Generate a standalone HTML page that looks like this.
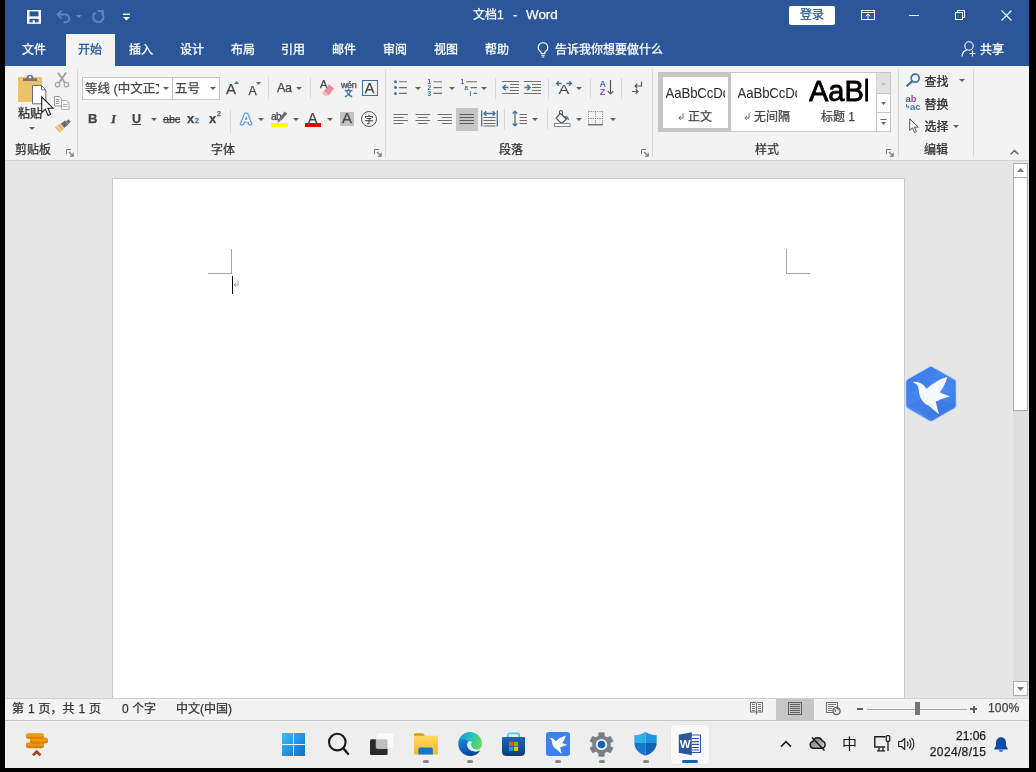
<!DOCTYPE html>
<html lang="zh-CN">
<head>
<meta charset="utf-8">
<title>文档1 - Word</title>
<style>
*{box-sizing:border-box;margin:0;padding:0}
html,body{width:1036px;height:772px;overflow:hidden;background:#000}
body{position:relative;font-family:"Liberation Sans","Noto Sans CJK SC",sans-serif;font-size:12px;color:#262626;line-height:1}
.a{position:absolute}
.t{position:absolute;white-space:nowrap;line-height:16px;height:16px;-webkit-text-stroke:0.25px currentColor}
svg{position:absolute;overflow:visible}
#screen{left:5px;top:0;width:1024px;height:768px;background:#e6e6e6;overflow:hidden}
#titlebar{left:0;top:0;width:1024px;height:66px;background:#2b579a}
#ribbon{left:0;top:66px;width:1024px;height:95px;background:#f3f3f3;border-bottom:1px solid #d2d2d2}
#doc{left:0;top:161px;width:1024px;height:537px;background:#e6e6e6}
#page{left:107px;top:17px;width:793px;height:540px;background:#fff;border:1px solid #c8c8c8;border-bottom:none}
#status{left:0;top:698px;width:1024px;height:22px;background:#f3f3f3;border-top:1px solid #cfcfcf}
#taskbar{left:0;top:720px;width:1024px;height:48px;background:#eeeeee;border-top:1px solid #c4c4c4}
.w{color:#fff}
.tab{position:absolute;top:41px;height:18px;line-height:18px;font-size:12px;color:#fff;white-space:nowrap;-webkit-text-stroke:0.3px currentColor}
.gl{position:absolute;top:142px;height:16px;line-height:16px;font-size:12px;color:#333;white-space:nowrap;-webkit-text-stroke:0.25px currentColor}
.sep{position:absolute;width:1px;background:#d8d8d8}
.dd{position:absolute;width:0;height:0;border-left:3px solid transparent;border-right:3px solid transparent;border-top:3px solid #5e5e5e;margin-left:-0.5px}
#abs{left:-5px;top:0;width:1036px;height:772px;will-change:transform}
.k{color:#444}
</style>
</head>
<body>
<div id="screen" class="a">

<!-- ===== title bar + tabs ===== -->
<div id="titlebar" class="a">
<div class="a" style="left:0;top:0;width:1024px;height:66px;will-change:transform">
  <!-- quick access: save -->
  <svg style="left:22px;top:10px" width="14" height="14" viewBox="0 0 14 14"><rect x="0" y="0" width="14" height="13.8" fill="#fff"/><rect x="2.5" y="1.4" width="9" height="5" fill="#2b579a"/><rect x="2.5" y="8.8" width="9" height="3.6" fill="#2b579a"/><rect x="5.6" y="10.4" width="2.4" height="3.4" fill="#fff"/></svg>
  <!-- undo -->
  <svg style="left:51px;top:9px" width="16" height="15" viewBox="0 0 16 15"><path d="M5.6 1.6 L1.6 5.6 L5.6 9.6 M2 5.6 H9.5 A3.8 3.8 0 0 1 9.5 13.2 H7.5" fill="none" stroke="#5d83c4" stroke-width="2"/></svg>
  <svg style="left:71px;top:15px" width="6" height="3" viewBox="0 0 6 3"><path d="M0 0h6l-3 3z" fill="#5d83c4"/></svg>
  <!-- repeat -->
  <svg style="left:86px;top:9px" width="15" height="15" viewBox="0 0 15 15"><path d="M4.4 3.6 A5.2 5.2 0 1 0 10.6 3.8 M6.6 2 H11.8 V7" fill="none" stroke="#5d83c4" stroke-width="2"/></svg>
  <!-- customize -->
  <svg style="left:118px;top:13px" width="7" height="8" viewBox="0 0 7 8"><rect x="0" y="0.6" width="7" height="1.4" fill="#fff"/><path d="M0 4h7l-3.5 3.6z" fill="#fff"/></svg>
  <!-- title -->
  <div class="t w" style="left:468px;top:7px;font-size:12px;white-space:pre">文档1</div>
  <div class="t w" style="left:508px;top:7px;font-size:13px;white-space:pre">-</div>
  <div class="t w" style="left:521px;top:7px;font-size:13.4px;white-space:pre">Word</div>
  <!-- login -->
  <div class="a" style="left:784px;top:6px;width:46px;height:19px;background:#fff;border-radius:2px"></div>
  <div class="t" style="left:795px;top:7px;font-size:12px;color:#2b579a">登录</div>
  <!-- ribbon display options -->
  <svg style="left:856px;top:10px" width="14" height="10" viewBox="0 0 14 10"><rect x="0.5" y="0.5" width="13" height="9" fill="none" stroke="#fff"/><path d="M0.5 2.5h13" stroke="#fff"/><path d="M7 4v5M4.6 6.2L7 3.9l2.4 2.3" fill="none" stroke="#fff"/></svg>
  <!-- minimize -->
  <div class="a" style="left:904px;top:15px;width:10px;height:1px;background:#fff"></div>
  <!-- restore -->
  <svg style="left:950px;top:10px" width="10" height="10" viewBox="0 0 10 10"><rect x="0.5" y="2.5" width="7" height="7" fill="none" stroke="#fff"/><path d="M2.5 2.5v-2h7v7h-2" fill="none" stroke="#fff"/></svg>
  <!-- close -->
  <svg style="left:996px;top:10px" width="11" height="11" viewBox="0 0 11 11"><path d="M0.5 0.5l10 10M10.5 0.5l-10 10" stroke="#fff" stroke-width="1.1"/></svg>
  <!-- tabs -->
  <div class="a" style="left:61px;top:34px;width:49px;height:33px;background:#f3f3f3"></div>
  <div class="tab" style="left:17px">文件</div>
  <div class="tab" style="left:73px;color:#2b579a">开始</div>
  <div class="tab" style="left:124px">插入</div>
  <div class="tab" style="left:175px">设计</div>
  <div class="tab" style="left:226px">布局</div>
  <div class="tab" style="left:276px">引用</div>
  <div class="tab" style="left:327px">邮件</div>
  <div class="tab" style="left:378px">审阅</div>
  <div class="tab" style="left:429px">视图</div>
  <div class="tab" style="left:480px">帮助</div>
  <!-- bulb -->
  <svg style="left:532px;top:42px" width="12" height="16" viewBox="0 0 12 16"><path d="M6 0.8a4.6 4.6 0 0 0-2.4 8.6c0.4 0.5 0.6 1.2 0.6 2.1h3.6c0-0.9 0.2-1.6 0.6-2.1A4.6 4.6 0 0 0 6 0.8z" fill="none" stroke="#fff" stroke-width="1.1"/><path d="M4.2 13.2h3.6M4.7 15h2.6" stroke="#fff" stroke-width="1.1"/></svg>
  <div class="tab" style="left:550px">告诉我你想要做什么</div>
  <!-- share -->
  <svg style="left:956px;top:41px" width="16" height="16" viewBox="0 0 16 16"><circle cx="8" cy="5" r="4.2" fill="none" stroke="#fff" stroke-width="1.1"/><path d="M1 15.5c0.4-4 2.6-6 5-6.6" fill="none" stroke="#fff" stroke-width="1.1"/><path d="M11.5 9.5v6M8.5 12.5h6" stroke="#fff" stroke-width="1.1"/></svg>
  <div class="tab" style="left:975px">共享</div>
</div>
</div>

<!-- ===== ribbon ===== -->
<div id="ribbon" class="a">
</div>

<!-- ===== document area ===== -->
<div id="doc" class="a">
  <div id="page" class="a"></div>
</div>

<!-- ===== status bar ===== -->
<div id="status" class="a">
</div>

<!-- ===== taskbar ===== -->
<div id="taskbar" class="a">
</div>

<!-- ===== ribbon contents (absolute image coords) ===== -->
<div id="abs" class="a">
<!-- clipboard group -->
<svg style="left:17px;top:73px" width="30" height="32" viewBox="0 0 30 32">
  <rect x="1" y="4" width="24" height="25" rx="1" fill="#eac36c"/>
  <path d="M6 8V5.2h3.6a3.4 3.4 0 0 1 6.8 0H20V8z" fill="#767676"/><circle cx="13" cy="4.2" r="1.3" fill="#f3f3f3"/>
  <path d="M15.5 12.5h9l4.3 4.3v14h-13.3z" fill="#fff" stroke="#6d6d6d" stroke-width="1"/><path d="M24.5 12.5v4.3h4.3" fill="none" stroke="#6d6d6d" stroke-width="1"/>
</svg>
<div class="t" style="left:18px;top:106px">粘贴</div>
<div class="dd" style="left:29px;top:127px"></div>
<!-- mouse pointer -->
<svg style="left:41px;top:96px" width="13" height="21" viewBox="0 0 13 21"><path d="M0.7 0.8V16.6l3.7-3.5 2.7 6.3 2.5-1.1-2.7-6.1h5.1z" fill="#fff" stroke="#1a1a1a" stroke-width="1.1" stroke-linejoin="miter"/></svg>
<!-- cut -->
<svg style="left:54px;top:72px" width="16" height="16" viewBox="0 0 16 16"><path d="M4 0.5l6.8 10.2M12 0.5L5.2 10.7" stroke="#a0a0a0" stroke-width="1.9" fill="none"/><circle cx="3.6" cy="12.6" r="2.3" fill="none" stroke="#a6a6a6" stroke-width="1.3"/><circle cx="12.4" cy="12.6" r="2.3" fill="none" stroke="#a6a6a6" stroke-width="1.3"/></svg>
<!-- copy -->
<svg style="left:54px;top:96px" width="16" height="14" viewBox="0 0 16 14"><path d="M0.5 0.5h5l2 2v7.5h-7z" fill="#f3f3f3" stroke="#9a9a9a"/><path d="M2 3.5h3M2 5.5h3M2 7.5h3" stroke="#9a9a9a"/><path d="M7.5 4.5h5l2.5 2.5v6.5h-7.5z" fill="#f8f8f8" stroke="#b0b0b0"/><path d="M9 8.500h4.500M9 10.500h4.500" stroke="#b0b0b0"/></svg>
<!-- format painter -->
<svg style="left:54px;top:119px" width="17" height="14" viewBox="0 0 17 14"><path d="M12 2.400l2.600-2.200 2.200 2.600-2.600 2.200z" fill="#6e6e6e"/><path d="M6.800 4.800l4.200-3.400 3.400 4.200-4.200 3.400z" fill="#6e6e6e"/><path d="M0.800 8.200l5.200-3.400 4 5-4 4z" fill="#e8b961"/><path d="M3 7l4.600 5.500" stroke="#f3f3f3" stroke-width="0.900"/></svg>
<div class="gl" style="left:15px">剪贴板</div>
<svg style="left:66px;top:149px" width="8" height="8" viewBox="0 0 8 8"><path d="M0.500 5V0.500H5" fill="none" stroke="#777"/><path d="M3 3l4 4M7.200 3.800V7.200H3.800" fill="none" stroke="#777" stroke-width="1.100"/></svg>
<div class="sep" style="left:77px;top:69px;height:88px"></div>

<!-- font group: row 1 -->
<div class="a" style="left:82px;top:77px;width:91px;height:23px;background:#fff;border:1px solid #c6c6c6"></div>
<div class="a" style="left:172px;top:77px;width:48px;height:23px;background:#fff;border:1px solid #c6c6c6"></div>
<div class="t" style="left:85px;top:81px;width:74px;overflow:hidden;font-size:12.5px;color:#444">等线 (中文正文</div>
<div class="dd" style="left:163px;top:87px"></div>
<div class="t" style="left:175px;top:81px;font-size:12.5px;color:#444">五号</div>
<div class="dd" style="left:210px;top:87px"></div>
<div class="t k" style="left:226px;top:81px;font-size:15px">A</div>
<svg style="left:234px;top:81px" width="5" height="3" viewBox="0 0 5 3"><path d="M0 3h5l-2.500-3z" fill="#41719c"/></svg>
<div class="t k" style="left:248.5px;top:82.5px;font-size:12.3px">A</div>
<svg style="left:255.5px;top:81.5px" width="5" height="3" viewBox="0 0 5 3"><path d="M0 0h5l-2.500 3z" fill="#41719c"/></svg>
<div class="sep" style="left:268px;top:77px;height:22px"></div>
<div class="t k" style="left:277px;top:80px;font-size:12.6px;letter-spacing:-0.3px">Aa</div>
<div class="dd" style="left:296px;top:87px"></div>
<div class="sep" style="left:310px;top:77px;height:22px"></div>
<!-- clear formatting -->
<div class="t k" style="left:320px;top:76px;font-size:11px">A</div>
<svg style="left:321px;top:84px" width="14" height="12" viewBox="0 0 14 12"><path d="M8.200 0.500l5 4-5.400 6.800-5-4z" fill="#e88ea0"/><path d="M2.800 7.300l5 4-1 0.500h-3l-2.700-2.200z" fill="#f0b8c2"/></svg>
<!-- phonetic guide -->
<div class="t k" style="left:341px;top:77px;font-size:9px;letter-spacing:-0.4px">wén</div>
<div class="t" style="left:344.5px;top:85.5px;font-size:8px;color:#2e75b6;font-weight:bold">文</div>
<!-- char border -->
<div class="a" style="left:362px;top:80px;width:16px;height:16px;border:1px solid #41719c"></div>
<div class="t k" style="left:364.7px;top:80px;font-size:14.5px">A</div>

<!-- font group: row 2 -->
<div class="t k" style="left:88px;top:111px;font-size:13px;font-weight:bold">B</div>
<div class="t k" style="left:111px;top:111px;font-size:13px;font-style:italic;font-family:'Liberation Serif',serif;font-weight:bold">I</div>
<div class="t k" style="left:132px;top:111px;font-size:12.5px;font-weight:bold;text-decoration:underline">U</div>
<div class="dd" style="left:151px;top:118px"></div>
<div class="t k" style="left:163px;top:111px;font-size:11px;text-decoration:line-through;letter-spacing:-0.2px">abc</div>
<div class="t k" style="left:187px;top:111px;font-size:13px;font-weight:bold">x</div>
<div class="t" style="left:195px;top:117px;font-size:7px;color:#41719c;font-weight:bold;line-height:8px;height:8px">2</div>
<div class="t k" style="left:209px;top:111px;font-size:13px;font-weight:bold">x</div>
<div class="t" style="left:217px;top:110px;font-size:7px;color:#41719c;font-weight:bold;line-height:8px;height:8px">2</div>
<div class="sep" style="left:230px;top:109px;height:24px"></div>
<!-- text effects -->
<svg style="left:238px;top:110px" width="16" height="17" viewBox="0 0 16 17"><text x="8" y="13.6" text-anchor="middle" font-family="Liberation Sans, sans-serif" font-size="14.5" fill="none" stroke="#c5dbf2" stroke-width="4.2" stroke-linejoin="round">A</text><text x="8" y="13.6" text-anchor="middle" font-family="Liberation Sans, sans-serif" font-size="14.5" fill="none" stroke="#4f8ccb" stroke-width="2.4" stroke-linejoin="round">A</text><text x="8" y="13.6" text-anchor="middle" font-family="Liberation Sans, sans-serif" font-size="14.5" fill="#fff" stroke="#fff" stroke-width="0.5">A</text></svg>
<div class="dd" style="left:258px;top:118px"></div>
<!-- highlight -->
<div class="t k" style="left:271px;top:108.5px;font-size:10px;letter-spacing:-0.5px">ab</div>
<svg style="left:276px;top:111px" width="12" height="12" viewBox="0 0 12 12"><path d="M8.800 0.600l2.400 2-5.800 6.900-2.400-2z" fill="#6e6e6e"/><path d="M2.600 8l2.300 1.900-3.600 1.500z" fill="#6e6e6e"/></svg>
<div class="a" style="left:271px;top:123px;width:17px;height:4px;background:#ffff00"></div>
<div class="dd" style="left:293px;top:118px"></div>
<!-- font colour -->
<div class="t k" style="left:308px;top:110px;font-size:14px">A</div>
<div class="a" style="left:305px;top:123px;width:16px;height:4px;background:#e00000"></div>
<div class="dd" style="left:327px;top:118px"></div>
<!-- char shading -->
<div class="a" style="left:340px;top:112px;width:14px;height:14px;background:#c2c2c2"></div>
<div class="t k" style="left:342px;top:110px;font-size:15px">A</div>
<!-- enclosed char -->
<div class="a" style="left:361px;top:111px;width:16px;height:16px;border:1px solid #555;border-radius:50%"></div>
<div class="t k" style="left:364.5px;top:111.5px;font-size:9px">字</div>
<div class="gl" style="left:211px">字体</div>
<svg style="left:374px;top:149px" width="8" height="8" viewBox="0 0 8 8"><path d="M0.500 5V0.500H5" fill="none" stroke="#777"/><path d="M3 3l4 4M7.200 3.800V7.200H3.800" fill="none" stroke="#777" stroke-width="1.100"/></svg>
<div class="sep" style="left:385px;top:69px;height:88px"></div>
<!-- paragraph group row 1 -->
<!-- bullets -->
<svg style="left:393px;top:79px" width="15" height="17" viewBox="0 0 15 17"><circle cx="2.5" cy="2.8" r="1.5" fill="#41719c"/><circle cx="2.5" cy="8.6" r="1.5" fill="#41719c"/><circle cx="2.5" cy="14.400" r="1.5" fill="#41719c"/><path d="M6 2.8h8M6 8.6h8M6 14.400h8" stroke="#6e6e6e" stroke-width="1.1"/></svg>
<div class="dd" style="left:415px;top:87px"></div>
<!-- numbering -->
<svg style="left:427px;top:78px" width="16" height="19" viewBox="0 0 16 19"><g font-family="Liberation Sans, sans-serif" font-size="6.5" font-weight="bold" fill="#41719c"><text x="0.5" y="6">1</text><text x="0.5" y="12">2</text><text x="0.5" y="18">3</text></g><path d="M6.5 3.8h8.5M6.5 9.6h8.5M6.5 15.400h8.5" stroke="#6e6e6e" stroke-width="1.1"/></svg>
<div class="dd" style="left:449px;top:87px"></div>
<!-- multilevel -->
<svg style="left:460px;top:78px" width="18" height="19" viewBox="0 0 18 19"><g font-family="Liberation Sans, sans-serif" font-size="6.5" font-weight="bold" fill="#41719c"><text x="0.5" y="6">1</text><text x="4.5" y="12">a</text><text x="9.5" y="18">i</text></g><path d="M6 3.8h11M10.5 9.6h6.5M13.5 15.400h3.5" stroke="#6e6e6e" stroke-width="1.1"/></svg>
<div class="dd" style="left:481px;top:87px"></div>
<div class="sep" style="left:495px;top:78px;height:21px"></div>
<!-- decrease indent -->
<svg style="left:502px;top:80px" width="17" height="15" viewBox="0 0 17 15"><path d="M0 1.5h17M8 4.5h9M8 7.5h9M8 10.5h9M0 13.5h17" stroke="#6e6e6e" stroke-width="1.1"/><path d="M6.5 7.5H1M3.8 4.7L1 7.5l2.8 2.8" fill="none" stroke="#41719c" stroke-width="1.5"/></svg>
<!-- increase indent -->
<svg style="left:524px;top:80px" width="17" height="15" viewBox="0 0 17 15"><path d="M0 1.5h17M8 4.5h9M8 7.5h9M8 10.5h9M0 13.5h17" stroke="#6e6e6e" stroke-width="1.1"/><path d="M0.5 7.5H6M3.2 4.7L6 7.5l-2.8 2.8" fill="none" stroke="#41719c" stroke-width="1.5"/></svg>
<div class="sep" style="left:548px;top:78px;height:21px"></div>
<!-- asian layout -->
<svg style="left:555px;top:80px" width="18" height="16" viewBox="0 0 18 16"><path d="M1.5 3.5h5M3.8 1.2L1.5 3.5l2.3 2.3M16.5 3.5h-5M14.2 1.2l2.3 2.3-2.3 2.3" fill="none" stroke="#41719c" stroke-width="1.3"/><text x="9" y="14.5" text-anchor="middle" font-family="Liberation Sans, sans-serif" font-size="12" fill="#444" transform="translate(9 0) scale(1.35 1) translate(-9 0)">A</text></svg>
<div class="dd" style="left:576px;top:87px"></div>
<div class="sep" style="left:590px;top:78px;height:21px"></div>
<!-- sort -->
<svg style="left:599px;top:79px" width="16" height="17" viewBox="0 0 16 17"><text x="0.5" y="7.5" font-family="Liberation Sans, sans-serif" font-size="9" font-weight="bold" fill="#41719c">A</text><text x="0.8" y="16" font-family="Liberation Sans, sans-serif" font-size="9" font-weight="bold" fill="#a349a4">Z</text><path d="M11.5 1v14M8.7 12.2l2.8 2.8 2.8-2.8" fill="none" stroke="#555" stroke-width="1.2"/></svg>
<div class="sep" style="left:621px;top:78px;height:21px"></div>
<!-- show marks -->
<svg style="left:631px;top:81px" width="12" height="14" viewBox="0 0 12 14"><path d="M10.5 0.5v4.5H4M6.3 2.7L4 5l2.3 2.3" fill="none" stroke="#555" stroke-width="1.2"/><path d="M1 10.5h6M4.7 8.2L7 10.5l-2.3 2.3" fill="none" stroke="#555" stroke-width="1.2"/></svg>

<!-- paragraph group row 2 -->
<svg style="left:393px;top:113px" width="16" height="12" viewBox="0 0 16 12"><path d="M0.5 1.5h14.5M0.5 4.5h10M0.5 7.5h14.5M0.5 10.5h10" stroke="#6e6e6e" stroke-width="1.1"/></svg>
<svg style="left:415px;top:113px" width="16" height="12" viewBox="0 0 16 12"><path d="M0.5 1.5h14.5M3 4.5h9.5M0.5 7.5h14.5M3 10.5h9.5" stroke="#6e6e6e" stroke-width="1.1"/></svg>
<svg style="left:437px;top:113px" width="16" height="12" viewBox="0 0 16 12"><path d="M0.5 1.5h14.5M5 4.5h10M0.5 7.5h14.5M5 10.5h10" stroke="#6e6e6e" stroke-width="1.1"/></svg>
<div class="a" style="left:456px;top:108px;width:22px;height:23px;background:#c6c6c6"></div>
<svg style="left:459px;top:113px" width="16" height="12" viewBox="0 0 16 12"><path d="M0.5 1.5h14.5M0.5 4.5h14.5M0.5 7.5h14.5M0.5 10.5h14.5" stroke="#5a5a5a" stroke-width="1.1"/></svg>
<!-- distributed -->
<svg style="left:481px;top:110px" width="17" height="17" viewBox="0 0 17 17"><path d="M0.7 0.5v16M16.3 0.5v16" stroke="#41719c" stroke-width="1.3"/><path d="M3 3.5h11M5.3 1.2L3 3.5l2.3 2.3M11.7 1.2L14 3.5l-2.3 2.3" fill="none" stroke="#41719c" stroke-width="1.3"/><path d="M2.5 7.5h12M2.5 10.5h12M2.5 13.5h12M2.5 16h12" stroke="#6e6e6e" stroke-width="1.1"/></svg>
<div class="sep" style="left:504px;top:109px;height:21px"></div>
<!-- line spacing -->
<svg style="left:512px;top:110px" width="16" height="17" viewBox="0 0 16 17"><path d="M3 1v15M0.7 3.5L3 1.2l2.3 2.3M0.7 13.5L3 15.8l2.3-2.3" fill="none" stroke="#41719c" stroke-width="1.3"/><path d="M7.5 4.5h7.5M7.5 7.5h7.5M7.5 10.5h7.5M7.5 13.5h7.5" stroke="#6e6e6e" stroke-width="1.1"/></svg>
<div class="dd" style="left:532px;top:118px"></div>
<div class="sep" style="left:547px;top:109px;height:21px"></div>
<!-- shading -->
<svg style="left:554px;top:110px" width="17" height="17" viewBox="0 0 17 17"><path d="M6.5 3.5l6 5.5-5 4.5-5.5-5.5z" fill="#fff" stroke="#555" stroke-width="1.1" stroke-linejoin="round"/><path d="M5.5 5V2a1.5 1.5 0 0 1 3 0v3.5" fill="none" stroke="#555" stroke-width="1.1"/><path d="M9.5 6.2c3-1 5.5 0.5 5.5 4.3-1.2-1.5-2.5-2-4-1.5z" fill="#41719c"/><rect x="0.5" y="13.5" width="15.5" height="3" fill="#fff" stroke="#8a8a8a"/></svg>
<div class="dd" style="left:576px;top:118px"></div>
<!-- borders -->
<svg style="left:588px;top:111px" width="15" height="15" viewBox="0 0 15 15"><path d="M0.5 0.5h14M0.5 7.5h14" stroke="#777" stroke-width="1" stroke-dasharray="1 1.2"/><path d="M0.5 0.5v13M7.5 0.5v13M14.5 0.5v13" stroke="#777" stroke-width="1" stroke-dasharray="1 1.2"/><path d="M0 13.8h15" stroke="#555" stroke-width="1.2"/></svg>
<div class="dd" style="left:610px;top:118px"></div>
<div class="gl" style="left:499px">段落</div>
<svg style="left:641px;top:149px" width="8" height="8" viewBox="0 0 8 8"><path d="M0.5 5V0.5H5" fill="none" stroke="#777"/><path d="M3 3l4 4M7.2 3.8V7.2H3.8" fill="none" stroke="#777" stroke-width="1.1"/></svg>
<div class="sep" style="left:652px;top:69px;height:88px"></div>
<!-- styles gallery -->
<div class="a" style="left:658px;top:72px;width:233px;height:60px;background:#fff;border:1px solid #c6c6c6"></div>
<div class="a" style="left:659px;top:73px;width:72px;height:58px;background:#c6c6c6"></div><div class="a" style="left:662.5px;top:76.5px;width:65px;height:51px;background:#fff"></div>
<div class="t" style="left:665.5px;top:86px;width:59px;overflow:hidden;font-size:13.2px;color:#2a2a2a;letter-spacing:-0.1px;transform:scaleY(1.07);transform-origin:50% 80%;-webkit-text-stroke:0">AaBbCcDd</div>
<svg style="left:678px;top:113px" width="6" height="8" viewBox="0 0 6 8"><path d="M5 0.5v4.5H1M2.8 3L0.8 5l2 2" fill="none" stroke="#555" stroke-width="0.9"/></svg>
<div class="t k" style="left:688px;top:109px">正文</div>
<div class="t" style="left:737.5px;top:86px;width:59px;overflow:hidden;font-size:13.2px;color:#2a2a2a;letter-spacing:-0.1px;transform:scaleY(1.07);transform-origin:50% 80%;-webkit-text-stroke:0">AaBbCcDd</div>
<svg style="left:744px;top:113px" width="6" height="8" viewBox="0 0 6 8"><path d="M5 0.5v4.5H1M2.8 3L0.8 5l2 2" fill="none" stroke="#555" stroke-width="0.9"/></svg>
<div class="t k" style="left:754px;top:109px">无间隔</div>
<div class="t" style="left:809px;top:74px;width:59px;height:34px;line-height:34px;overflow:hidden;font-size:29px;color:#000;-webkit-text-stroke:0.8px #000">AaBb</div>
<div class="t k" style="left:821px;top:109px">标题 1</div>
<!-- gallery scroll buttons -->
<div class="a" style="left:876px;top:73px;width:14px;height:21px;background:#e1e1e1;border-left:1px solid #d4d4d4"></div>
<div class="a" style="left:876px;top:93px;width:14px;height:20px;background:#fff;border:1px solid #c6c6c6;border-right:none"></div>
<div class="a" style="left:876px;top:112px;width:14px;height:20px;background:#fff;border:1px solid #c6c6c6;border-right:none"></div>
<svg style="left:881px;top:82px" width="5" height="3" viewBox="0 0 5 3"><path d="M0 3h5l-2.5-3z" fill="#c0c0c0"/></svg>
<svg style="left:881px;top:102px" width="5" height="3" viewBox="0 0 5 3"><path d="M0 0h5l-2.5 3z" fill="#666"/></svg>
<svg style="left:880px;top:119px" width="7" height="7" viewBox="0 0 7 7"><path d="M0.5 0.5h6" stroke="#666"/><path d="M1 3h5l-2.5 3z" fill="#666"/></svg>
<div class="gl" style="left:755px">样式</div>
<svg style="left:886px;top:149px" width="8" height="8" viewBox="0 0 8 8"><path d="M0.5 5V0.5H5" fill="none" stroke="#777"/><path d="M3 3l4 4M7.2 3.8V7.2H3.8" fill="none" stroke="#777" stroke-width="1.1"/></svg>
<div class="sep" style="left:898px;top:69px;height:88px"></div>

<!-- editing group -->
<svg style="left:906px;top:73px" width="15" height="14" viewBox="0 0 15 14"><circle cx="9.2" cy="5.2" r="4" fill="none" stroke="#41719c" stroke-width="1.7"/><path d="M6 8.400L1.2 12.8" stroke="#41719c" stroke-width="2.2" stroke-linecap="round"/></svg>
<div class="t" style="left:924.5px;top:74px">查找</div>
<div class="dd" style="left:959px;top:79px"></div>
<svg style="left:905px;top:95px" width="18" height="16" viewBox="0 0 18 16"><g font-family="Liberation Sans, sans-serif" font-size="9.5" font-weight="bold"><text x="0.5" y="7" fill="#555">a</text><text x="5.8" y="7" fill="#a349a4">b</text><text x="5" y="15" fill="#41719c">ac</text></g><path d="M1.5 9v3h2.5M2.8 10.600l1.400 1.400-1.400 1.400" fill="none" stroke="#41719c" stroke-width="0.9"/></svg>
<div class="t" style="left:924.5px;top:96.5px">替换</div>
<svg style="left:909px;top:118px" width="11" height="16" viewBox="0 0 11 16"><path d="M0.7 0.8V12.400l2.8-2.600 2 4.8 1.9-0.8-2-4.7h3.9z" fill="#fff" stroke="#555" stroke-width="1" stroke-linejoin="miter"/></svg>
<div class="t" style="left:924.5px;top:119px">选择</div>
<div class="dd" style="left:953px;top:125px"></div>
<div class="gl" style="left:924px">编辑</div>
<div class="sep" style="left:973px;top:69px;height:88px"></div>
<svg style="left:1010px;top:149px" width="9" height="6" viewBox="0 0 9 6"><path d="M0.7 5.300L4.5 1.5l3.8 3.8" fill="none" stroke="#666" stroke-width="1.5"/></svg>


<!-- document area overlays -->
<div class="a" style="left:231px;top:249px;width:1px;height:25px;background:#a6a6a6"></div>
<div class="a" style="left:208px;top:273px;width:24px;height:1px;background:#a6a6a6"></div>
<div class="a" style="left:786px;top:249px;width:1px;height:25px;background:#a6a6a6"></div>
<div class="a" style="left:786px;top:273px;width:24px;height:1px;background:#a6a6a6"></div>
<div class="a" style="left:232px;top:276px;width:1px;height:18px;background:#000"></div>
<svg style="left:233px;top:280px" width="6" height="8" viewBox="0 0 6 8"><path d="M5 0.5v4.5H1M2.8 3L0.8 5l2 2" fill="none" stroke="#8a8a8a" stroke-width="0.9"/></svg>
<!-- vertical scrollbar -->
<div class="a" style="left:1013px;top:163px;width:15px;height:534px;background:#dedede"></div>
<div class="a" style="left:1013px;top:163px;width:15px;height:15px;background:#fff;border:1px solid #ababab"></div>
<svg style="left:1017px;top:168px" width="7" height="4" viewBox="0 0 7 4"><path d="M0 4h7l-3.5-4z" fill="#777"/></svg>
<div class="a" style="left:1013px;top:177px;width:15px;height:234px;background:#fff;border:1px solid #ababab"></div>
<div class="a" style="left:1013px;top:681px;width:15px;height:15px;background:#fff;border:1px solid #ababab"></div>
<svg style="left:1017px;top:687px" width="7" height="4" viewBox="0 0 7 4"><path d="M0 0h7l-3.5 4z" fill="#777"/></svg>
<!-- floating assistant (hexagon bird) -->
<svg style="left:904px;top:364px" width="54" height="59" viewBox="-2 -2 54 59">
  <defs><linearGradient id="hx" x1="0" y1="0" x2="1" y2="1"><stop offset="0" stop-color="#3b7be6"/><stop offset="0.55" stop-color="#4a8af2"/><stop offset="1" stop-color="#3a78e2"/></linearGradient>
  <clipPath id="hxc"><path d="M25 3.9 L46.7 16.2 L46.7 39.5 L25 51.8 L3.3 39.5 L3.3 16.2 Z" stroke-width="6.6" stroke-linejoin="round"/></clipPath></defs>
  <path d="M25 4 L46.6 16.3 L46.6 39.4 L25 51.7 L3.4 39.4 L3.4 16.3 Z" fill="#bcd4fb" stroke="#bcd4fb" stroke-width="8.2" stroke-linejoin="round"/>
  <path d="M25 4 L46.6 16.3 L46.6 39.4 L25 51.7 L3.4 39.4 L3.4 16.3 Z" fill="url(#hx)" stroke="url(#hx)" stroke-width="6.2" stroke-linejoin="round"/>
  <path d="M25 3 L48 16 L25 27.7 L2 16Z" fill="#3f7fe9" opacity="0.5"/>
  <path d="M2 39.5 L25 27.7 L48 39.5 L25 52.5Z" fill="#3672de" opacity="0.45"/>
  <path d="M6.7 16 Q10 15.2 13.6 16.8 Q18.3 18.8 20.7 22.8 Q30 14 41.4 11 Q38.8 20 33.8 26.3 Q39 28.8 44 30.4 Q36 32.2 29.8 35.8 Q31.2 42 33 48.3 Q27 43.7 22.8 39.8 Q14.6 36.2 13.1 27 Q12.7 21 10.8 18.6 Z" fill="#f4f8ff"/>
</svg>

<!-- status bar contents -->
<div class="t" style="left:12px;top:701px;word-spacing:0.6px;color:#333">第 1 页，共 1 页</div>
<div class="t" style="left:122px;top:701px;color:#333">0 个字</div>
<div class="t" style="left:176px;top:701px;color:#333">中文(中国)</div>
<!-- read mode -->
<svg style="left:750px;top:702px" width="13" height="13" viewBox="0 0 13 13"><path d="M0.5 0.5h5.2l0.8 0.8 0.8-0.8h5.2v9.5h-5.2l-0.8 0.8-0.8-0.8h-5.2z" fill="#f3f3f3" stroke="#6a6a6a"/><path d="M6.5 1v11.5" stroke="#6a6a6a"/><path d="M2 2.5h3M2 4.5h3M2 6.5h3M2 8.5h3M8 2.5h3M8 4.5h3M8 6.5h3M8 8.5h3" stroke="#6a6a6a" stroke-width="0.9"/></svg>
<!-- print layout (active) -->
<div class="a" style="left:776px;top:699px;width:38px;height:21px;background:#c6c6c6"></div>
<svg style="left:788px;top:702px" width="14" height="13" viewBox="0 0 14 13"><rect x="0.5" y="0.5" width="13" height="12" fill="none" stroke="#5e5e5e"/><path d="M2 2.5h10M2 4.5h10M2 6.5h10M2 8.5h10M2 10.5h10" stroke="#5e5e5e" stroke-width="1"/></svg>
<!-- web layout -->
<svg style="left:826px;top:702px" width="15" height="13" viewBox="0 0 15 13"><path d="M7 10.5H0.5V0.5h11v5" fill="none" stroke="#6a6a6a"/><path d="M2 2.5h8M2 4.5h6M2 6.5h4.5M2 8.5h4" stroke="#6a6a6a" stroke-width="0.9"/><circle cx="10.5" cy="9" r="3.6" fill="#e9e9e9" stroke="#5e5e5e" stroke-width="1.3"/><path d="M8 7.5c1.5 0.3 2 1.2 1.2 2.4M10.5 5.8c0.5 1 1.5 1.5 3 1.3" fill="none" stroke="#6a6a6a" stroke-width="1.1"/></svg>
<!-- zoom slider -->
<div class="a" style="left:857px;top:708px;width:6px;height:2px;background:#5e5e5e"></div>
<div class="a" style="left:867px;top:709px;width:100px;height:1px;background:#a9a9a9"></div>
<div class="a" style="left:915px;top:702px;width:5px;height:13px;background:#777"></div>
<div class="a" style="left:970px;top:708px;width:7px;height:2px;background:#5e5e5e"></div>
<div class="a" style="left:972.5px;top:705.5px;width:2px;height:7px;background:#5e5e5e"></div>
<div class="t k" style="left:988px;top:700px;font-size:12px;letter-spacing:0.2px">100%</div>

<!-- taskbar contents -->
<!-- widgets: coin stack -->
<svg style="left:25px;top:733px" width="24" height="24" viewBox="0 0 24 24">
  <rect x="1" y="9.8" width="18" height="5.4" rx="2.7" fill="#d97c00"/><rect x="1" y="9.4" width="18" height="3.8" rx="1.9" fill="#ee950a"/>
  <rect x="5" y="5" width="18" height="5.4" rx="2.7" fill="#d97c00"/><rect x="5" y="4.6" width="18" height="3.8" rx="1.9" fill="#f09a0c"/>
  <rect x="1" y="0.6" width="18" height="5.2" rx="2.6" fill="#db7e00"/><rect x="1" y="0.4" width="18" height="3.6" rx="1.8" fill="#f29c0e"/>
  <path d="M8 22.4l3.7-3.8 3.7 3.8" fill="none" stroke="#b03c24" stroke-width="2.7"/>
</svg>
<!-- start -->
<svg style="left:282px;top:733px" width="23" height="23" viewBox="0 0 23 23"><defs><linearGradient id="wg" x1="0" y1="0" x2="1" y2="1"><stop offset="0" stop-color="#3dbdf7"/><stop offset="1" stop-color="#0a6fcb"/></linearGradient></defs><path d="M0 0h11v11H0zM12 0h11v11H12zM0 12h11v11H0zM12 12h11v11H12z" fill="url(#wg)"/></svg>
<!-- search -->
<svg style="left:326px;top:731px" width="24" height="25" viewBox="0 0 24 25"><circle cx="11.3" cy="11.1" r="8.3" fill="none" stroke="#1b1b1b" stroke-width="2.1"/><path d="M17.3 17.3l4.8 5.6" stroke="#1b1b1b" stroke-width="2.3" stroke-linecap="round"/></svg>
<!-- task view -->
<svg style="left:370px;top:733px" width="24" height="22" viewBox="0 0 24 22"><rect x="0" y="6.3" width="17.6" height="15.6" rx="1.5" fill="#2a2a2a"/><rect x="6.2" y="0" width="17.6" height="15.6" rx="1.5" fill="#ffffff" fill-opacity="0.7"/><rect x="6.2" y="0" width="17.6" height="15.6" rx="1.5" fill="none" stroke="#e6e6e6" stroke-width="0.6"/></svg>
<!-- explorer -->
<svg style="left:414px;top:733px" width="24" height="22" viewBox="0 0 24 22"><defs><linearGradient id="fg" x1="0" y1="0" x2="0" y2="1"><stop offset="0" stop-color="#ffd75a"/><stop offset="1" stop-color="#f5b92a"/></linearGradient></defs><path d="M0 1.2Q0 0.2 1 0.2H8.2Q9 0.2 9.6 1L11 3H0z" fill="#d99a0c"/><rect x="0" y="2.8" width="24" height="18.6" rx="1" fill="url(#fg)"/><path d="M4.3 21.4V16.4Q4.3 14.6 6.1 14.6H17Q18.8 14.6 18.8 16.4V21.4z" fill="#1b72c9"/></svg>
<div class="a" style="left:423px;top:760px;width:6px;height:3px;border-radius:1.5px;background:#85858c"></div>
<!-- edge -->
<svg style="left:458px;top:732px" width="24" height="24" viewBox="0 0 24 24"><defs><linearGradient id="eg1" x1="0" y1="0.2" x2="1" y2="0.5"><stop offset="0" stop-color="#1b9ade"/><stop offset="0.5" stop-color="#27bfc2"/><stop offset="1" stop-color="#63dc55"/></linearGradient><linearGradient id="eg2" x1="0" y1="0" x2="0.5" y2="1"><stop offset="0" stop-color="#1a8ae2"/><stop offset="1" stop-color="#0b459a"/></linearGradient></defs>
  <path d="M12 0A12 12 0 0 1 24 12C24 15.5 21.5 17.8 18.5 17.8 15.5 17.8 13 16 13 13L0.4 9.5C1.5 4 6.5 0 12 0z" fill="url(#eg1)"/>
  <circle cx="12" cy="12" r="12" fill="url(#eg1)" opacity="0"/>
  <path d="M0.4 9.5C-0.8 17 4.5 24 12.5 24 17 24 20.5 21.5 22.3 18.2 19.5 19.8 15.5 20 12.5 18 9.5 16 8.5 12.5 10.5 9.5 8 6.5 3 6 0.4 9.5z" fill="url(#eg2)"/>
  <path d="M10.5 9.3C8.3 12 9 16 12.3 18 15.3 19.8 19.3 19.5 22 18 19 18.3 16 17.6 14.3 15.8 12.6 14 12.6 11.5 14 10 12.8 9.2 11.5 9 10.5 9.3z" fill="#e4f7fb"/>
</svg>
<div class="a" style="left:467px;top:760px;width:6px;height:3px;border-radius:1.5px;background:#85858c"></div>
<!-- store -->
<svg style="left:502px;top:732px" width="23" height="24" viewBox="0 0 23 24"><defs><linearGradient id="sg" x1="0" y1="0" x2="0" y2="1"><stop offset="0" stop-color="#1767bb"/><stop offset="1" stop-color="#0f3d7c"/></linearGradient></defs><path d="M5.8 6V3.2Q5.8 1.4 7.6 1.4H15.4Q17.2 1.4 17.2 3.2V6" fill="none" stroke="#5cc6ea" stroke-width="1.8"/><path d="M0 6.2Q0 5 1.2 5H21.8Q23 5 23 6.2V19.5Q23 24 18.5 24H4.5Q0 24 0 19.5z" fill="url(#sg)"/><rect x="7" y="9.8" width="4.2" height="4.2" fill="#f25022"/><rect x="11.9" y="9.8" width="4.2" height="4.2" fill="#7fba00"/><rect x="7" y="14.7" width="4.2" height="4.2" fill="#00a4ef"/><rect x="11.9" y="14.7" width="4.2" height="4.2" fill="#ffb900"/></svg>
<!-- bird app -->
<svg style="left:546px;top:732px" width="24" height="24" viewBox="0 0 24 24"><rect x="0" y="0" width="24" height="24" rx="3" fill="#3b82f0"/><g transform="translate(-0.6 -2.2) scale(0.5)"><path d="M6.7 16 Q10 15.4 13.5 17 Q18 19 20.5 23 Q30 14 41.2 11.2 Q38.5 20 33.5 26.5 Q39 29 43.7 30.4 Q36 32 29.5 35.5 Q31 42 32.8 48.1 Q27 43.5 23 39.5 Q15 36 13.5 27 Q13 21 11 18.5 Z" fill="#fff"/></g></svg>
<div class="a" style="left:555px;top:760px;width:6px;height:3px;border-radius:1.5px;background:#85858c"></div>
<!-- settings -->
<svg style="left:589px;top:732px" width="25" height="25" viewBox="-12.5 -12.5 25 25"><g fill="#7b8088"><circle r="9.3"/><rect x="-3.2" y="-12.2" width="6.4" height="6" rx="1.2" transform="rotate(0)"/><rect x="-3.2" y="-12.2" width="6.4" height="6" rx="1.2" transform="rotate(60)"/><rect x="-3.2" y="-12.2" width="6.4" height="6" rx="1.2" transform="rotate(120)"/><rect x="-3.2" y="-12.2" width="6.4" height="6" rx="1.2" transform="rotate(180)"/><rect x="-3.2" y="-12.2" width="6.4" height="6" rx="1.2" transform="rotate(240)"/><rect x="-3.2" y="-12.2" width="6.4" height="6" rx="1.2" transform="rotate(300)"/></g><circle r="5.6" fill="#f4f6fa"/><circle r="3.8" fill="#1a5fb4"/></svg>
<div class="a" style="left:599px;top:760px;width:6px;height:3px;border-radius:1.5px;background:#85858c"></div>
<!-- security shield -->
<svg style="left:634px;top:732px" width="23" height="24" viewBox="0 0 23 24"><defs><clipPath id="shc"><path d="M11.5 0C8.5 2 4.5 3 0.3 3.2V10.5C0.3 17 5 21.5 11.5 23.8 18 21.5 22.7 17 22.7 10.5V3.2C18.5 3 14.5 2 11.5 0z"/></clipPath></defs><g clip-path="url(#shc)"><rect x="0" y="0" width="11.5" height="11" fill="#33acea"/><rect x="11.5" y="0" width="11.5" height="11" fill="#1c95e2"/><rect x="0" y="11" width="11.5" height="13" fill="#1477cc"/><rect x="11.5" y="11" width="11.5" height="13" fill="#0f62b4"/></g></svg>
<div class="a" style="left:643px;top:760px;width:6px;height:3px;border-radius:1.5px;background:#85858c"></div>
<!-- word (active) -->
<div class="a" style="left:671px;top:725px;width:38px;height:39px;border-radius:4px;background:#f9f9f9;box-shadow:0 0 0 0.5px #e4e4e4"></div>
<svg style="left:678px;top:732px" width="23" height="24" viewBox="0 0 23 24"><rect x="12" y="3" width="10.5" height="17.5" fill="#fff" stroke="#2b579a" stroke-width="1"/><path d="M14 6.5h7M14 9.5h7M14 12.5h7M14 15.5h7M14 18h7" stroke="#2b579a" stroke-width="1.2"/><path d="M14 11h7" stroke="#9db8de" stroke-width="1.2"/><path d="M0.8 2.8L13.8 0.3V23.3L0.8 20.8z" fill="#2b579a"/><text x="7.3" y="16.2" text-anchor="middle" font-family="Liberation Sans, sans-serif" font-weight="bold" font-size="11.5" fill="#fff">W</text></svg>
<div class="a" style="left:682px;top:760px;width:16px;height:3px;border-radius:1.5px;background:#0a64b4"></div>
<!-- tray -->
<svg style="left:780px;top:740px" width="12" height="8" viewBox="0 0 12 8"><path d="M1 6.6l5-5 5 5" fill="none" stroke="#1b1b1b" stroke-width="1.5"/></svg>
<svg style="left:809px;top:736px" width="18" height="16" viewBox="0 0 18 16"><defs><linearGradient id="cg" x1="0" y1="0" x2="1" y2="1"><stop offset="0" stop-color="#6a6a6a"/><stop offset="1" stop-color="#d8d8d8"/></linearGradient></defs><path d="M4.5 12.3a3.5 3.5 0 0 1-0.6-6.9 5 5 0 0 1 9.4-0.6 4 4 0 0 1 0.5 7.5z" fill="url(#cg)" stroke="#1b1b1b" stroke-width="1.4"/><path d="M3 1.5l12.5 13" stroke="#1b1b1b" stroke-width="1.6"/></svg>
<div class="t" style="left:842px;top:734px;font-size:15px;line-height:20px;height:20px;color:#1b1b1b;-webkit-text-stroke:0">中</div>
<svg style="left:874px;top:735px" width="17" height="17" viewBox="0 0 17 17"><path d="M11 12H0.8V1.8H11.5" fill="none" stroke="#1b1b1b" stroke-width="1.4"/><path d="M3 15.8h8M5 12.5v3M9 12.5v3" stroke="#1b1b1b" stroke-width="1.3"/><rect x="12.2" y="0.7" width="3.6" height="5.6" rx="1" fill="#eee" stroke="#1b1b1b" stroke-width="1.2"/><path d="M14 6.5v9.5" stroke="#1b1b1b" stroke-width="1.3"/></svg>
<svg style="left:898px;top:737px" width="17" height="14" viewBox="0 0 17 14"><path d="M0.7 4.5h2.8L6.7 1.5v11L3.5 9.5H0.7z" fill="none" stroke="#1b1b1b" stroke-width="1.1" stroke-linejoin="round"/><path d="M9 4.5a3.5 3.5 0 0 1 0 5M11.2 2.7a6 6 0 0 1 0 8.6M13.5 1a8.5 8.5 0 0 1 0 12" fill="none" stroke="#1b1b1b" stroke-width="1.1"/></svg>
<div class="t" style="left:926px;top:728px;width:60px;text-align:right;font-size:12px;color:#1b1b1b">21:06</div>
<div class="t" style="left:916px;top:744px;width:70.4px;text-align:right;font-size:12px;letter-spacing:0.35px;color:#1b1b1b">2024/8/15</div>
<svg style="left:994px;top:737px" width="14" height="15" viewBox="0 0 14 15"><path d="M7 0.3a5 5 0 0 0-5 5v3.5L0.3 11.6v0.8H13.7v-0.8L12 8.8V5.3a5 5 0 0 0-5-5z" fill="#0a4aa8"/><path d="M4.8 13.2a2.3 2.3 0 0 0 4.4 0z" fill="#0a4aa8"/></svg>

</div>

</div>
</body>
</html>
